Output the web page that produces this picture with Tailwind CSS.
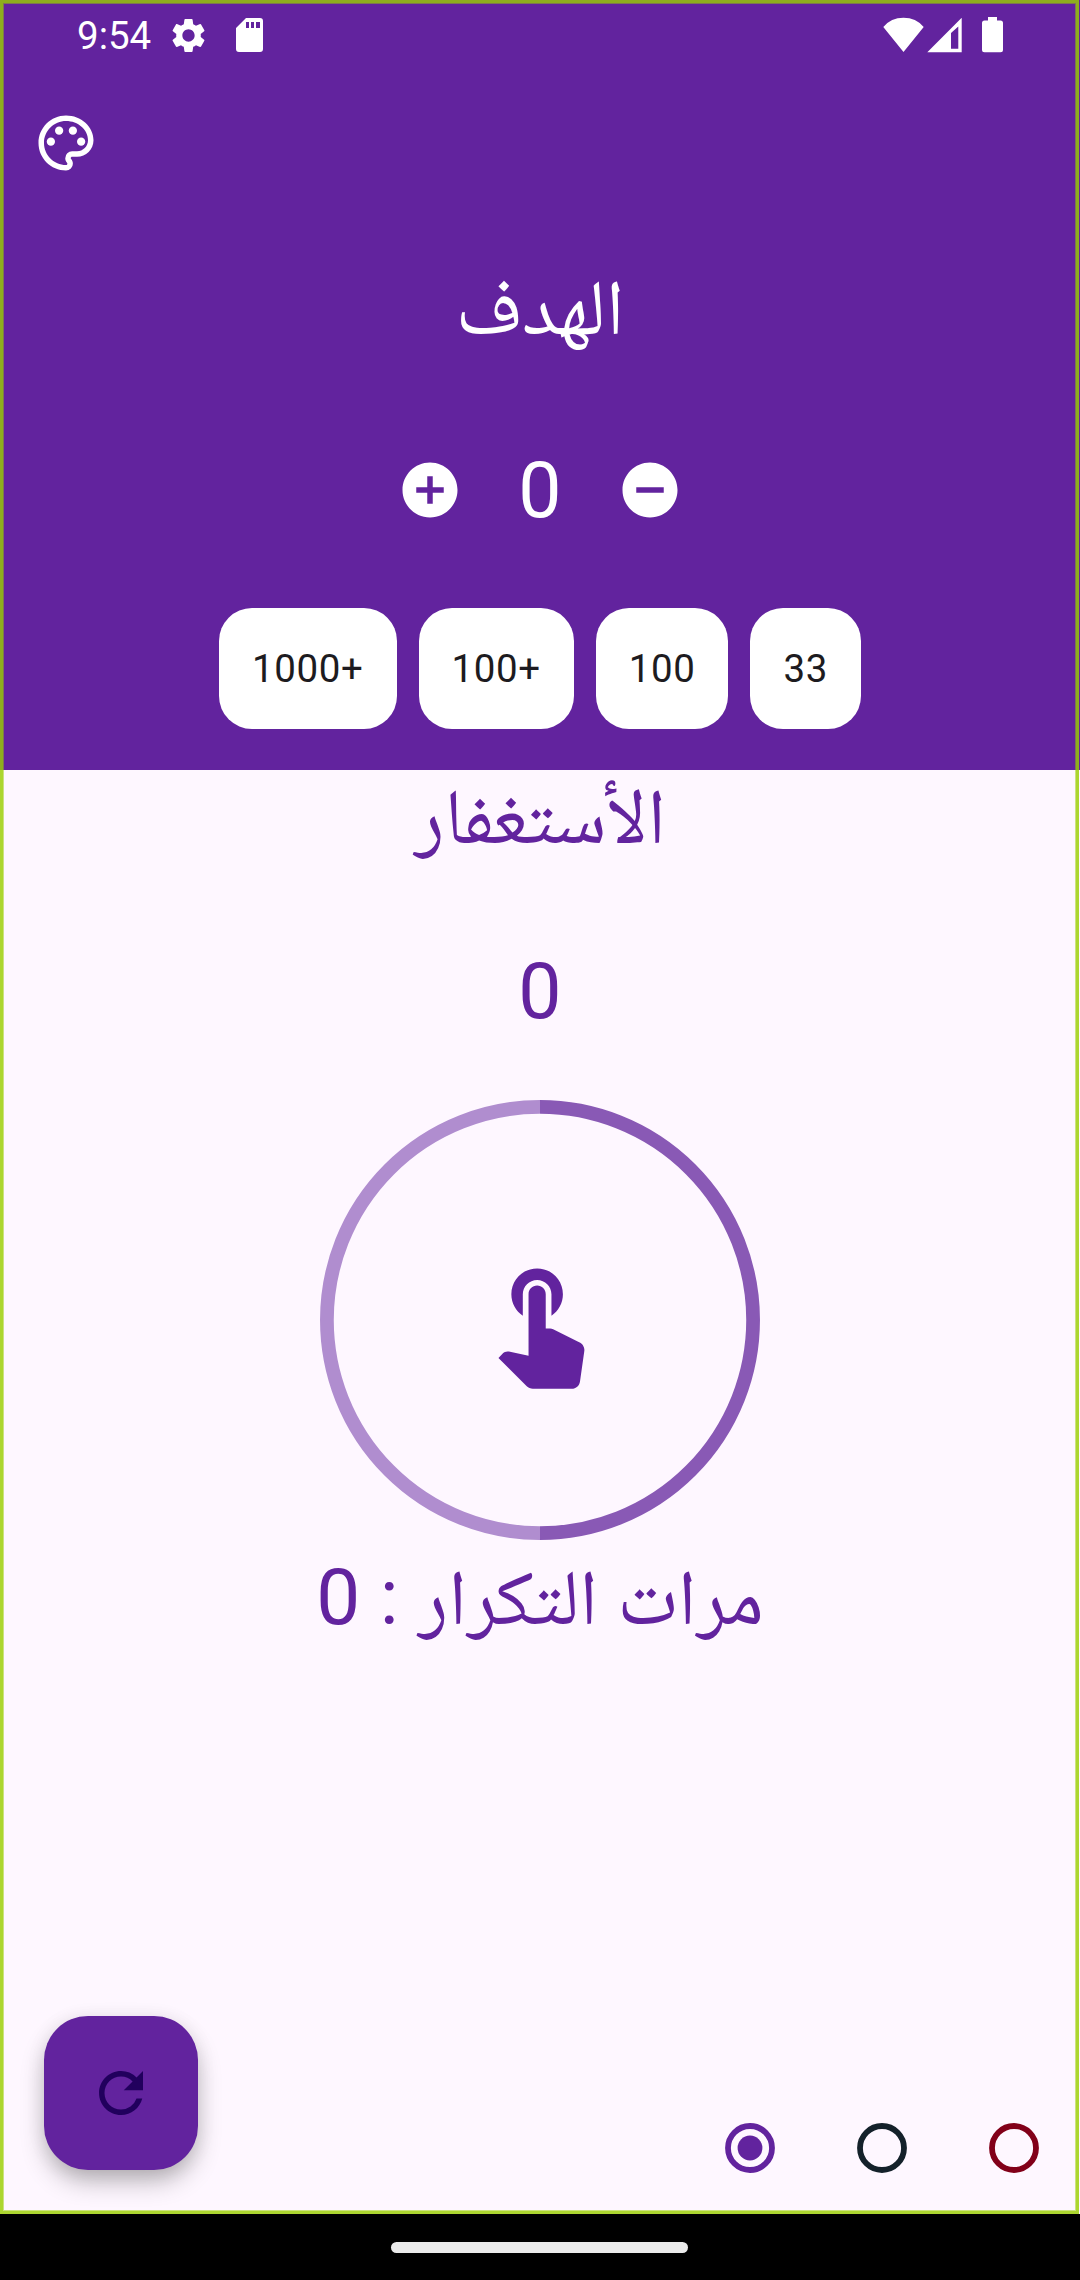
<!DOCTYPE html>
<html lang="ar">
<head>
<meta charset="utf-8">
<meta name="viewport" content="width=device-width">
<title>الأستغفار</title>
<script src="https://cdn.jsdelivr.net/npm/@tailwindcss/browser@4"></script>
</head>
<body class="bg-black">
<div class="relative flex h-[2280px] w-[1080px] flex-col overflow-hidden bg-black font-[Roboto,'Noto_Naskh_Arabic','DejaVu_Sans',sans-serif] text-[77px] leading-[90px]">
  <header class="flex h-[770px] flex-col items-center bg-[#62239e] text-white">
    <div class="flex h-[70px] w-full items-center justify-between px-[77px]">
      <div class="flex items-center">
        <span class="w-[91px] pt-[2px] text-[38.5px] leading-[70px]">9:54</span>
        <svg class="h-[41px] w-[41px]" viewBox="0 0 24 24" fill="currentColor"><path d="M19.14 12.94c.04-.3.06-.61.06-.94 0-.32-.02-.64-.07-.94l2.03-1.58a.49.49 0 0 0 .12-.61l-1.92-3.32a.488.488 0 0 0-.59-.22l-2.39.96c-.5-.38-1.03-.7-1.62-.94l-.36-2.54a.484.484 0 0 0-.48-.41h-3.84c-.24 0-.43.17-.47.41l-.36 2.54c-.59.24-1.13.57-1.62.94l-2.39-.96c-.22-.08-.47 0-.59.22L2.74 8.87c-.12.21-.08.47.12.61l2.03 1.58c-.05.3-.09.63-.09.94s.02.64.07.94l-2.03 1.58a.49.49 0 0 0-.12.61l1.92 3.32c.12.22.37.29.59.22l2.39-.96c.5.38 1.03.7 1.62.94l.36 2.54c.05.24.24.41.48.41h3.84c.24 0 .44-.17.47-.41l.36-2.54c.59-.24 1.13-.56 1.62-.94l2.39.96c.22.08.47 0 .59-.22l1.92-3.32c.12-.22.07-.47-.12-.61l-2.01-1.58zM12 15.6c-1.98 0-3.6-1.62-3.6-3.6s1.62-3.6 3.6-3.6 3.6 1.62 3.6 3.6-1.62 3.6-3.6 3.6z"/></svg>
        <svg class="ml-[27px] h-[34px] w-[27px]" viewBox="0 0 27 34" fill="currentColor" fill-rule="evenodd"><path d="M10 0H24Q27 0 27 3V31Q27 34 24 34H3Q0 34 0 31V10ZM10 4v6h3V4ZM15 4v6h3V4ZM20 4v6h4V4Z"/></svg>
      </div>
      <svg class="h-[36px] w-[120px]" viewBox="883 16.500 120 36" fill="currentColor" fill-rule="evenodd"><path d="M883.3 26.5Q891 17.3 903.5 17.3T923.7 26.5L903.5 51.5ZM927.3 51.8 961.7 17.3V51.8ZM951 32.5V48.3H958.3V26ZM988 16.500h9v3.500h3.500q2.500 0 2.500 2.500v26.800q0 2.500-2.500 2.500h-16q-2.500 0-2.500-2.500V22.500q0-2.500 2.500-2.500H988Z"/></svg>
    </div>
    <div class="flex w-full pl-[33px] pt-[40px]">
      <svg class="h-[66px] w-[66px]" viewBox="0 0 24 24" fill="currentColor"><path d="M12 22C6.490 22 2 17.510 2 12S6.490 2 12 2s10 4.040 10 9c0 3.310-2.690 6-6 6h-1.770c-.28 0-.5.22-.5.5 0 .12.05.23.13.33.41.47.64 1.060.64 1.670A2.500 2.500 0 0 1 12 22zm0-18c-4.410 0-8 3.590-8 8s3.590 8 8 8c.28 0 .5-.22.5-.5a.54.54 0 0 0-.14-.35c-.41-.46-.63-1.050-.63-1.650a2.500 2.500 0 0 1 2.500-2.500H16c2.210 0 4-1.790 4-4 0-3.860-3.590-7-8-7z"/><circle cx="6.500" cy="11.500" r="1.500"/><circle cx="9.500" cy="7.500" r="1.500"/><circle cx="14.500" cy="7.500" r="1.500"/><circle cx="17.500" cy="11.500" r="1.500"/></svg>
    </div>
    <h1 dir="rtl" class="mt-[86px] h-[90px] whitespace-nowrap text-[78.3px]">الهدف</h1>
    <div class="mt-[93px] flex h-[90px] w-[286px] items-center justify-between">
      <svg class="h-[66px] w-[66px]" viewBox="0 0 24 24" fill="currentColor"><path d="M12 2C6.480 2 2 6.480 2 12s4.480 10 10 10 10-4.480 10-10S17.520 2 12 2zm5 11h-4v4h-2v-4H7v-2h4V7h2v4h4v2z"/></svg>
      <span class="pt-[2px]">0</span>
      <svg class="h-[66px] w-[66px]" viewBox="0 0 24 24" fill="currentColor"><path d="M12 2C6.480 2 2 6.480 2 12s4.480 10 10 10 10-4.480 10-10S17.520 2 12 2zm5 11H7v-2h10v2z"/></svg>
    </div>
    <div class="mt-[72.500px] flex gap-[22px] text-[38.500px] leading-[121px] tracking-[0.600px] text-[#1d1b20]">
      <div class="h-[121px] rounded-[33px] bg-white px-[33px]">1000+</div>
      <div class="h-[121px] rounded-[33px] bg-white px-[33px]">100+</div>
      <div class="h-[121px] rounded-[33px] bg-white px-[33px]">100</div>
      <div class="h-[121px] rounded-[33px] bg-white px-[33px]">33</div>
    </div>
  </header>
  <main class="flex h-[1444px] flex-col items-center bg-[#fef7ff] text-[#62239e]">
    <h2 dir="rtl" class="mt-px h-[90px] whitespace-nowrap text-[78.3px]">الأستغفار</h2>
    <div class="mt-[86px] h-[90px]">0</div>
    <svg class="mt-[63px] h-[440px] w-[440px] shrink-0" viewBox="0 0 440 440" fill="none">
      <path d="M220 433.100A213.100 213.100 0 0 1 220 6.900" stroke="#b08dcf" stroke-width="13.750"/>
      <path d="M220 6.900A213.100 213.100 0 0 1 220 433.100" stroke="#8959b5" stroke-width="13.750"/>
      <g transform="translate(151.250 151.250) scale(5.729)" fill="currentColor"><path d="M9 11.240V7.500C9 6.120 10.120 5 11.500 5S14 6.120 14 7.500v3.740c1.210-.81 2-2.180 2-3.740C16 5.010 13.990 3 11.500 3S7 5.010 7 7.500c0 1.560.79 2.930 2 3.740zm9.840 4.630l-4.540-2.260c-.17-.07-.35-.11-.54-.11H13v-6c0-.83-.67-1.500-1.500-1.500S10 6.670 10 7.500v10.740l-3.430-.72c-.08-.01-.15-.03-.24-.03-.31 0-.59.13-.79.33l-.79.8 4.940 4.940c.27.27.65.44 1.060.44h6.790c.75 0 1.330-.55 1.440-1.280l.75-5.270c.01-.07.02-.14.02-.2 0-.62-.38-1.160-.91-1.380z"/></g>
    </svg>
    <div dir="rtl" class="mt-[12px] h-[90px] whitespace-nowrap text-[78.3px]">مرات التكرار : 0</div>
    <div class="mt-auto flex w-full items-end justify-between pb-[44px] pl-[44px] pr-[33px]">
      <div class="flex h-[154px] w-[154px] items-center justify-center rounded-[44px] bg-[#62239e] text-[#21005d] shadow-[0_13px_26px_-3px_rgba(0,0,0,0.3),0_2px_20px_rgba(0,0,0,0.07)]">
        <svg class="h-[66px] w-[66px]" viewBox="0 0 24 24" fill="currentColor"><path d="M17.650 6.350A7.958 7.958 0 0 0 12 4c-4.420 0-7.990 3.580-7.990 8s3.570 8 7.990 8c3.730 0 6.840-2.550 7.730-6h-2.080A5.990 5.990 0 0 1 12 18c-3.310 0-6-2.690-6-6s2.690-6 6-6c1.660 0 3.140.69 4.220 1.780L13 11h7V4l-2.350 2.350z"/></svg>
      </div>
      <div class="-mb-[11px] flex gap-[66px]">
        <svg class="h-[66px] w-[66px]" viewBox="0 0 66 66" fill="none"><circle cx="33" cy="33" r="22" stroke="#62239e" stroke-width="5.800"/><circle cx="33" cy="33" r="12.400" fill="#62239e"/></svg>
        <svg class="h-[66px] w-[66px]" viewBox="0 0 66 66" fill="none"><circle cx="33" cy="33" r="22" stroke="#14212a" stroke-width="5.800"/></svg>
        <svg class="h-[66px] w-[66px]" viewBox="0 0 66 66" fill="none"><circle cx="33" cy="33" r="22" stroke="#820019" stroke-width="5.800"/></svg>
      </div>
    </div>
  </main>
  <footer class="flex h-[66px] items-center bg-black pl-[391px]">
    <div class="h-[11px] w-[297px] rounded-full bg-[#ebebeb]"></div>
  </footer>
  <div class="absolute left-0 top-0 h-[2214px] w-[1079px] border-[3px] border-[rgba(153,206,0,0.81)] shadow-[inset_0_0_0_1px_rgba(153,206,0,0.5)]"></div>
</div>
</body>
</html>
